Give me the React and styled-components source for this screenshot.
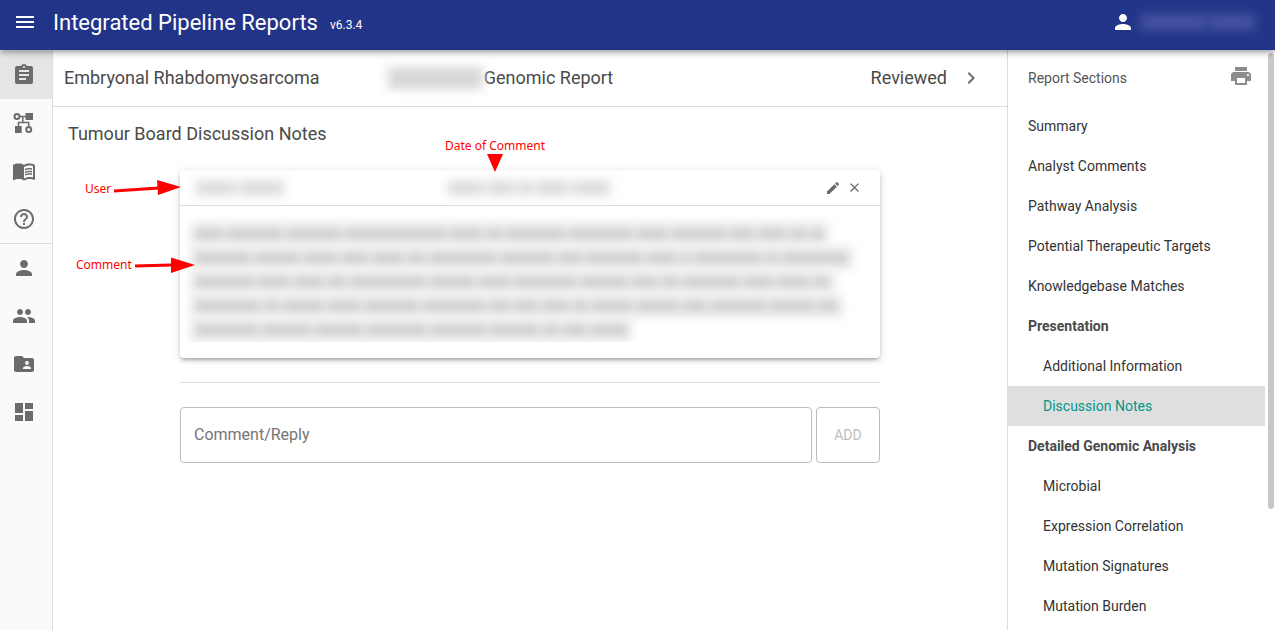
import React from 'react';
import styled, { createGlobalStyle } from 'styled-components';
import {
  MdMenu, MdPerson, MdAssignment, MdMenuBook, MdHelpOutline, MdPeople,
  MdFolderShared, MdDashboard, MdChevronRight, MdEdit, MdClose, MdPrint,
} from 'react-icons/md';

const GlobalStyle = createGlobalStyle`
  *, *::before, *::after { box-sizing: border-box; }
  body {
    margin: 0;
    background: #fff;
    color: #333;
    font-family: Roboto, "Liberation Sans", sans-serif;
    font-size: 14px;
    line-height: 20px;
  }
  h1, h2, h3, p, ul { margin: 0; padding: 0; font-weight: 400; }
  ul { list-style: none; }
`;

const Page = styled.div`
  display: flex;
  flex-direction: column;
  height: 100vh;
  overflow: hidden;
`;

const AppBar = styled.header`
  display: flex;
  align-items: center;
  flex: none;
  height: 50px;
  padding: 0 16px 6px 13px;
  background: #223488;
  color: #fff;
  position: relative;
  z-index: 2;
  box-shadow: 0 2px 4px -1px rgba(0, 0, 0, 0.2), 0 4px 5px rgba(0, 0, 0, 0.14),
    0 1px 10px rgba(0, 0, 0, 0.12);
`;

const IconButton = styled.button`
  display: flex;
  align-items: center;
  justify-content: center;
  flex: none;
  padding: ${(p) => p.$pad || 0}px;
  border: 0;
  background: none;
  color: ${(p) => p.$color || 'inherit'};
  cursor: pointer;
`;

const AppTitle = styled.h1`
  margin: 2px 0 0 16px;
  font-size: 22px;
  line-height: 32px;
`;

const Version = styled.span`
  margin: 6px auto 0 12px;
  font-size: 12px;
`;

const UserMenu = styled(IconButton)`
  gap: 2px;
`;

const Body = styled.div`
  display: flex;
  flex: 1;
  min-height: 0;
`;

const Rail = styled.nav`
  flex: none;
  width: 53px;
  padding-top: 1px;
  border-right: 1px solid #dcdcdc;
  background: #fafafa;
`;

const RailGroup = styled.ul`
  & + & { border-top: 1px solid #dcdcdc; }
`;

const RailLink = styled.a`
  display: flex;
  align-items: center;
  height: 48px;
  padding-left: 12px;
  color: #6b6b6b;
  background: ${(p) => (p.$active ? '#e5e5e5' : 'transparent')};
`;

const Main = styled.main`
  flex: 1;
  min-width: 0;
`;

const ReportHeader = styled.div`
  display: grid;
  grid-template-columns: 1fr auto 1fr;
  align-items: center;
  height: 57px;
  padding: 0 12px 0 11px;
  border-bottom: 1px solid #dcdcdc;
  color: #4a4a4a;
  font-size: 18px;
  line-height: 24px;
`;

const ReportName = styled.h2`
  display: flex;
  align-items: center;
  margin-left: -60px;
  font-size: 18px;
`;

const ReportState = styled.div`
  display: flex;
  align-items: center;
  justify-content: flex-end;
`;

const Notes = styled.section`
  padding: 15px;
`;

const NotesTitle = styled.h2`
  color: #4a4a4a;
  font-size: 18px;
  line-height: 24px;
`;

const Thread = styled.div`
  position: relative;
  max-width: 700px;
  margin: 24px auto 0;
`;

const Card = styled.article`
  height: 188px;
  border-radius: 4px;
  background: #fff;
  box-shadow: 0 3px 3px -2px rgba(0, 0, 0, 0.2), 0 3px 4px rgba(0, 0, 0, 0.14),
    0 1px 8px rgba(0, 0, 0, 0.12);
`;

const CardHeader = styled.header`
  display: grid;
  grid-template-columns: 252px 1fr auto;
  align-items: center;
  height: 36px;
  padding: 0 16px 0 12px;
  border-bottom: 1px solid #dcdcdc;
`;

const CardActions = styled.div`
  display: flex;
  gap: 2px;
`;

const CardBody = styled.div`
  margin: 9px 6px 0;
  padding: 7px 0 0 4px;
  height: 127px;
  overflow: hidden;
`;

const Redacted = styled.span`
  display: flex;
  flex: none;
  align-items: center;
  justify-self: start;
  gap: 4px;
  height: 24px;
  padding: 0 5px;
  background: ${(p) => p.$haze || 'transparent'};
  filter: blur(5px);
`;

const CommentLine = styled(Redacted)`
  width: max-content;
`;

const HiddenWord = styled.i`
  flex: none;
  width: ${(p) => p.$width}px;
  height: ${(p) => p.$height || 12}px;
  border-radius: 2px;
  background: ${(p) => p.$color || '#cfd0cf'};
`;

const Divider = styled.hr`
  height: 1px;
  margin: 24px 0;
  border: 0;
  background: #dcdcdc;
`;

const ReplyForm = styled.form`
  display: flex;
  gap: 4px;
  height: 56px;
`;

const ReplyInput = styled.input`
  flex: 1;
  min-width: 0;
  padding: 0 13px;
  border: 1px solid #bdbdbd;
  border-radius: 4px;
  font: 400 16px/20px Roboto, "Liberation Sans", sans-serif;
  &::placeholder { color: #757575; opacity: 1; }
`;

const AddButton = styled.button`
  width: 64px;
  border: 1px solid #bdbdbd;
  border-radius: 4px;
  background: #fff;
  color: #bdbdbd;
  font: 400 14px/20px Roboto, "Liberation Sans", sans-serif;
`;

const Annotation = styled.div`
  position: absolute;
  left: ${(p) => p.$left}px;
  top: ${(p) => p.$top}px;
  display: flex;
  flex-direction: ${(p) => (p.$down ? 'column' : 'row')};
  align-items: center;
  gap: ${(p) => (p.$down ? 0 : 2)}px;
  color: #f00;
  font: 400 12px/16px "Noto Sans", "Open Sans", sans-serif;
  white-space: nowrap;
  svg { flex: none; display: block; }
`;

const Sections = styled.aside`
  display: flex;
  flex: none;
  width: 268px;
  border-left: 1px solid #dcdcdc;
`;

const SectionsNav = styled.nav`
  flex: 1;
  min-width: 0;
`;

const SectionsHeader = styled.div`
  display: flex;
  align-items: flex-start;
  justify-content: space-between;
  height: 56px;
  padding: 14px 12px 0 20px;
  color: #555;
`;

const SectionsTitle = styled.span`
  line-height: 28px;
`;

const SectionLink = styled.a`
  display: block;
  padding: 10px 0 10px ${(p) => (p.$nested ? 35 : 20)}px;
  color: ${(p) => (p.$active ? '#009688' : '#333')};
  background: ${(p) => (p.$active ? '#dfdfdf' : 'transparent')};
  text-decoration: none;
`;

const SectionGroup = styled.h3`
  padding: 10px 0 10px 20px;
  color: #4a4a4a;
  font-size: 14px;
  font-weight: 700;
`;

const ScrollTrack = styled.div`
  width: 10px;
  padding: 3px 1px 0 3px;
`;

const ScrollThumb = styled.div`
  height: 79%;
  border-radius: 3px;
  background: #c8c8c8;
`;

function PathwayIcon() {
  return (
    <svg width="24" height="24" viewBox="0 0 24 24" fill="none" stroke="currentColor" aria-hidden="true">
      <circle cx="5" cy="5.6" r="2.5" strokeWidth="2" />
      <circle cx="16.7" cy="18.4" r="2.5" strokeWidth="2" />
      <path d="M8 5.6H14M10.8 5.6V11.5M6.5 16V11.5H16.7V15.5" strokeWidth="1.5" />
      <path d="M13.5 2H21V9H13.5ZM3 15H9.7V22H3Z" fill="currentColor" stroke="none" />
    </svg>
  );
}

function HiddenText({ words, color, height, haze, line }) {
  const Row = line ? CommentLine : Redacted;
  return (
    <Row $haze={haze} aria-hidden="true">
      {words.map((width, i) => (
        <HiddenWord key={i} $width={width} $color={color} $height={height} />
      ))}
    </Row>
  );
}

const reportLinks = [
  { label: 'Reports', Icon: MdAssignment, active: true },
  { label: 'Pathways', Icon: PathwayIcon },
  { label: 'Knowledgebase', Icon: MdMenuBook },
  { label: 'Help', Icon: MdHelpOutline },
];

const adminLinks = [
  { label: 'Users', Icon: MdPerson },
  { label: 'Groups', Icon: MdPeople },
  { label: 'Projects', Icon: MdFolderShared },
  { label: 'Dashboard', Icon: MdDashboard },
];

const sections = [
  { label: 'Summary' },
  { label: 'Analyst Comments' },
  { label: 'Pathway Analysis' },
  { label: 'Potential Therapeutic Targets' },
  { label: 'Knowledgebase Matches' },
  { label: 'Presentation', group: true },
  { label: 'Additional Information', nested: true },
  { label: 'Discussion Notes', nested: true, active: true },
  { label: 'Detailed Genomic Analysis', group: true },
  { label: 'Microbial', nested: true },
  { label: 'Expression Correlation', nested: true },
  { label: 'Mutation Signatures', nested: true },
  { label: 'Mutation Burden', nested: true },
];

const commentLines = [
  [28, 56, 54, 101, 32, 16, 59, 63, 32, 54, 24, 28, 16, 14],
  [56, 45, 33, 27, 32, 17, 67, 54, 24, 57, 29, 10, 67, 13, 66],
  [59, 32, 30, 18, 76, 45, 31, 62, 48, 25, 18, 57, 29, 32, 17],
  [65, 15, 41, 32, 55, 62, 21, 24, 27, 15, 40, 43, 24, 55, 44, 20],
  [63, 49, 48, 60, 55, 49, 16, 24, 36],
];

function RailLinks({ items }) {
  return (
    <RailGroup>
      {items.map(({ label, Icon, active }) => (
        <li key={label}>
          <RailLink href="#" aria-label={label} $active={active}>
            <Icon size={24} />
          </RailLink>
        </li>
      ))}
    </RailGroup>
  );
}

export default function App() {
  return (
    <Page>
      <GlobalStyle />
      <AppBar>
        <IconButton type="button" aria-label="Menu"><MdMenu size={24} /></IconButton>
        <AppTitle>Integrated Pipeline Reports</AppTitle>
        <Version>v6.3.4</Version>
        <UserMenu type="button" aria-label="Account">
          <MdPerson size={24} />
          <HiddenText words={[64, 44]} color="#4554a0" haze="#2b3c8d" height={14} />
        </UserMenu>
      </AppBar>
      <Body>
        <Rail aria-label="Application">
          <RailLinks items={reportLinks} />
          <RailLinks items={adminLinks} />
        </Rail>
        <Main>
          <ReportHeader>
            <span>Embryonal Rhabdomyosarcoma</span>
            <ReportName>
              <HiddenText words={[88]} color="#d8d8d8" haze="#e6e6e6" height={20} />
              <span>Genomic Report</span>
            </ReportName>
            <ReportState>
              Reviewed
              <IconButton type="button" aria-label="Next" $pad={12} $color="#6b6b6b">
                <MdChevronRight size={24} />
              </IconButton>
            </ReportState>
          </ReportHeader>
          <Notes>
            <NotesTitle>Tumour Board Discussion Notes</NotesTitle>
            <Thread>
              <Card>
                <CardHeader>
                  <HiddenText words={[40, 42]} color="#dcdcdc" haze="#f7f7f7" />
                  <HiddenText words={[36, 26, 14, 30, 38]} color="#dcdcdc" haze="#f7f7f7" />
                  <CardActions>
                    <IconButton type="button" aria-label="Edit comment" $pad={2} $color="#6b6b6b">
                      <MdEdit size={16} />
                    </IconButton>
                    <IconButton type="button" aria-label="Delete comment" $pad={2} $color="#6b6b6b">
                      <MdClose size={15} />
                    </IconButton>
                  </CardActions>
                </CardHeader>
                <CardBody>
                  {commentLines.map((words, i) => (
                    <HiddenText key={i} words={words} haze="#eeeeee" line />
                  ))}
                </CardBody>
              </Card>
              <Divider />
              <ReplyForm>
                <ReplyInput type="text" placeholder="Comment/Reply" aria-label="Comment/Reply" />
                <AddButton type="button" disabled>ADD</AddButton>
              </ReplyForm>
              <Annotation $left={-95} $top={10}>
                User
                <svg width="70" height="18" viewBox="0 0 70 18" fill="#f00" aria-hidden="true">
                  <path d="M1 11L46 8" stroke="#f00" strokeWidth="3" />
                  <path d="M44 0L68 7L45 15Z" />
                </svg>
              </Annotation>
              <Annotation $left={-104} $top={87}>
                Comment
                <svg width="61" height="16" viewBox="0 0 61 16" fill="#f00" aria-hidden="true">
                  <path d="M1 9L37 8" stroke="#f00" strokeWidth="3" />
                  <path d="M37 0.5L61 8L37 16Z" />
                </svg>
              </Annotation>
              <Annotation $left={265} $top={-32} $down>
                Date of Comment
                <svg width="16" height="19" viewBox="0 0 16 19" fill="#f00" aria-hidden="true">
                  <path d="M0 0H16L8 18Z" />
                </svg>
              </Annotation>
            </Thread>
          </Notes>
        </Main>
        <Sections>
          <SectionsNav aria-label="Report Sections">
            <SectionsHeader>
              <SectionsTitle>Report Sections</SectionsTitle>
              <IconButton type="button" aria-label="Print" $color="#8c8c8c"><MdPrint size={24} /></IconButton>
            </SectionsHeader>
            {sections.map(({ label, group, nested, active }) =>
              group ? (
                <SectionGroup key={label}>{label}</SectionGroup>
              ) : (
                <SectionLink key={label} href="#" $nested={nested} $active={active}>{label}</SectionLink>
              ),
            )}
          </SectionsNav>
          <ScrollTrack><ScrollThumb /></ScrollTrack>
        </Sections>
      </Body>
    </Page>
  );
}
